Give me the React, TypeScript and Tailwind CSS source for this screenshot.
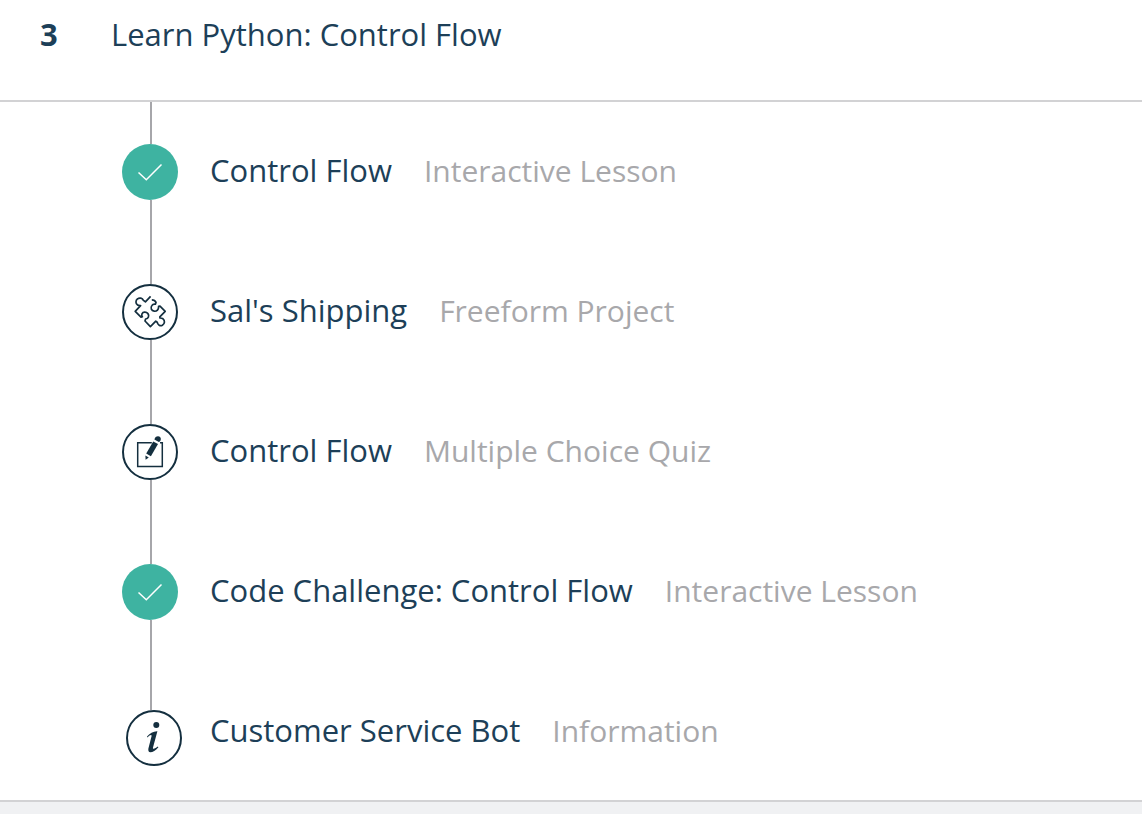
import React from "react";

type Kind = "done" | "puzzle" | "quiz" | "info";
type Item = { title: string; type: string; kind: Kind };

const items: Item[] = [
  { title: "Control Flow", type: "Interactive Lesson", kind: "done" },
  { title: "Sal's Shipping", type: "Freeform Project", kind: "puzzle" },
  { title: "Control Flow", type: "Multiple Choice Quiz", kind: "quiz" },
  { title: "Code Challenge: Control Flow", type: "Interactive Lesson", kind: "done" },
  { title: "Customer Service Bot", type: "Information", kind: "info" },
];

function StepIcon({ kind }: { kind: Kind }) {
  if (kind === "done") {
    return (
      <svg viewBox="0 0 56 56" className="size-14" aria-label="Completed" role="img">
        <circle cx="28" cy="28" r="28" fill="#3eb3a1" />
        <path d="M16.5 28.5 24.3 35.7 39.5 20.5" fill="none" stroke="#fff" strokeWidth="1.5" />
      </svg>
    );
  }
  return (
    <svg viewBox="0 0 56 56" className="size-14" aria-hidden="true">
      <circle cx="28" cy="28" r="27" fill="#fff" stroke="#142f3f" strokeWidth="2" />
      {kind === "puzzle" && (
        <path
          d="M28.6 12.4 23.4 17.8 21.4 16.4C20.4 14 17.4 13.4 15.6 14.8C13.4 16.4 13.4 19.6 15.6 21C16.4 21.5 17.6 21.5 18.6 21.6L13.2 27.3 19 33.2 20.4 32.8C18.8 30.8 20.2 28.4 22.6 28.2C25.4 28 27.4 30.6 26.4 33C26 34.2 25 34.8 23.6 35L23 37 28.4 42.6 33.8 37.2 35.2 38.2C35.6 41 38.2 42.4 40.4 41.2C42.8 39.8 43.2 36.6 41 34.8C40.2 34.2 39 34 38 34L37.8 32.8 43.2 27.4 38 22.2 36.6 22.4C36.8 25.4 34.8 27.6 32.2 27.2C29.4 26.8 28.2 24 29.8 21.6C30.4 20.6 31.6 20 33.4 20.2L34 18.4C33.4 17 32 15.8 29.8 15.8"
          fill="none"
          stroke="#142f3f"
          strokeWidth="1.7"
          strokeLinejoin="round"
        />
      )}
      {kind === "quiz" && (
        <>
          <path d="M29.8 18.7H15.7V42.5H40.3V18.7H38" fill="none" stroke="#142f3f" strokeWidth="1.5" />
          <path d="M31.2 17.4 36 20.1 28.9 32.3 24.2 29.6Z" fill="#142f3f" />
          <path d="M32.4 15.5C32.8 13.4 34.2 12.2 36 12.2 38 12.2 39.1 13.8 38.8 15.4 38.6 16.8 37.8 17.8 36.8 18.1Z" fill="#142f3f" />
          <path d="M23.4 31.5 26.8 33.5 23.6 35.8Z" fill="#142f3f" />
        </>
      )}
      {kind === "info" && (
        <>
          <circle cx="30.3" cy="15" r="3" fill="#142f3f" />
          <path
            d="M21 26.6C23.6 23.4 27.6 21 31.4 21.2L27 37.4C26.7 38.7 27.4 39 28.4 38.5 29.5 38 30.5 37.2 31.8 36.4L32.4 37.2C29.6 40.4 26.8 42.2 24.4 42.2 22.7 42.2 22 40.6 22.4 38.4L25.6 26C25.7 24.4 24 24.8 21.6 27.4Z"
            fill="#142f3f"
          />
        </>
      )}
    </svg>
  );
}

function Step({ item, last }: { item: Item; last: boolean }) {
  return (
    <li className="flex h-[140px] items-stretch last:h-[138px]">
      <div className="flex w-[88px] shrink-0 flex-col">
        <div className={last ? "ml-7 h-12 w-0.5 bg-[#a6a6aa]" : "ml-7 h-[42px] w-0.5 bg-[#a6a6aa]"} />
        <div className={last ? "ml-1" : ""}>
          <StepIcon kind={item.kind} />
        </div>
        {!last && <div className="ml-7 w-0.5 flex-1 bg-[#a6a6aa]" />}
      </div>
      <a href="#" className="flex items-baseline gap-8 pt-[46px] leading-[44px] whitespace-nowrap">
        <span className="text-[31px]">{item.title}</span>
        <span className="text-[30px] font-medium text-[#a8a8ab]">{item.type}</span>
      </a>
    </li>
  );
}

export default function App() {
  return (
    <div className="min-h-screen bg-[#f0f1f3] font-['Open_Sans','Noto_Sans',sans-serif] text-[#1d3f58]">
      <section className="border-b-2 border-[#d2d2d4] bg-white">
        <header className="flex items-baseline border-b-2 border-[#d2d2d4] pt-3 pb-11 pl-10 leading-[44px]">
          <span className="w-[71px] text-[31px] font-bold">3</span>
          <h2 className="text-[31px]">Learn Python: Control Flow</h2>
        </header>
        <ul className="pl-[122px]">
          {items.map((item, index) => (
            <Step key={index} item={item} last={index === items.length - 1} />
          ))}
        </ul>
      </section>
    </div>
  );
}
